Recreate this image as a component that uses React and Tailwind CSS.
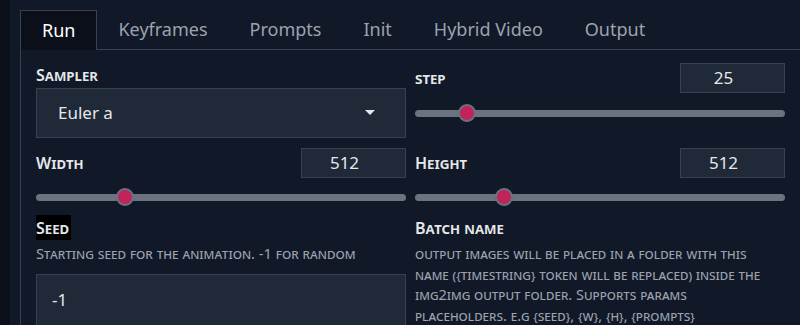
import React from "react";

const font = { fontFamily: '"Noto Sans", "Open Sans", sans-serif' };

function Label({ children, className = "" }) {
  return (
    <span className={"[font-variant:small-caps] text-[16px] leading-[20px] text-[#e5e7eb] font-semibold " + className}>
      {children}
    </span>
  );
}

function NumBox({ value }) {
  return (
    <div className="w-[105px] h-[30px] border border-[#374151] bg-[#1f2937] flex items-center justify-center pr-[18px] text-[17px] text-[#e5e7eb]">
      {value}
    </div>
  );
}

function Slider({ pct }) {
  return (
    <div className="relative h-[18px] flex items-center">
      <div className="w-full h-[7px] rounded-full bg-[#6b7280]" />
      <div
        className="absolute top-0 w-[18px] h-[18px] rounded-full bg-[#c0245a] border-2 border-[#6b7280] -translate-x-1/2"
        style={{ left: pct + "%" }}
      />
    </div>
  );
}

export default function App() {
  const tabs = ["Keyframes", "Prompts", "Init", "Hybrid Video", "Output"];
  return (
    <div className="w-[800px] h-[325px] overflow-hidden bg-[#111827] flex" style={font}>
      <div className="w-[10px] bg-[#0b0f19] shrink-0" />
      <div className="flex-1 pl-[10px] pt-[10px] flex flex-col min-h-0">
        <div className="flex h-[40px] shrink-0 items-stretch">
          <div className="px-[21px] border border-b-0 border-[#374151] bg-[#0b0f19] flex items-center text-[18px] text-white">
            Run
          </div>
          <div className="flex-1 flex border-b border-[#374151]">
            {tabs.map((t) => (
              <div key={t} className="px-[21px] flex items-center text-[18px] text-[#9ca3af]">
                {t}
              </div>
            ))}
          </div>
        </div>
        <div className="flex-1 shrink-0 border-l border-[#374151] pl-[15px] pr-[15px] pt-[12px] grid grid-cols-2 gap-x-[9px] content-start">
          {/* Row 1 */}
          <div className="flex flex-col">
            <div className="h-[26px] flex items-center"><Label>Sampler</Label></div>
            <div className="h-[50px] border border-[#374151] bg-[#1f2937] flex items-center justify-between pl-[21px] pr-[30px] text-[17px] text-[#e5e7eb]">
              <span>Euler a</span>
              <svg width="10" height="6" viewBox="0 0 10 6"><path d="M0 0 L10 0 L5 5 Z" fill="#e5e7eb" /></svg>
            </div>
          </div>
          <div className="flex flex-col">
            <div className="h-[30px] mt-[1px] flex items-center justify-between">
              <Label className="font-bold">step</Label>
              <NumBox value="25" />
            </div>
            <div className="mt-[11px]"><Slider pct={14} /></div>
          </div>
          {/* Row 2 */}
          <div className="flex flex-col mt-[10px]">
            <div className="h-[30px] flex items-center justify-between">
              <Label>Width</Label>
              <NumBox value="512" />
            </div>
            <div className="mt-[10px]"><Slider pct={24} /></div>
          </div>
          <div className="flex flex-col mt-[10px]">
            <div className="h-[30px] flex items-center justify-between">
              <Label>Height</Label>
              <NumBox value="512" />
            </div>
            <div className="mt-[10px]"><Slider pct={24} /></div>
          </div>
          {/* Row 3 */}
          <div className="flex flex-col mt-[9px]">
            <div className="flex">
              <Label className="bg-black h-[25px] flex items-center pr-[2px]">Seed</Label>
            </div>
            <div className="[font-variant:small-caps] text-[14.7px] leading-[20px] text-[#9ca3af] mt-[3px]">
              Starting seed for the animation. -1 for random
            </div>
            <div className="h-[60px] mt-[11px] border border-[#374151] bg-[#1f2937] pl-[15px] pt-[13px] text-[17px] leading-[24px] text-[#e5e7eb]">
              -1
            </div>
          </div>
          <div className="flex flex-col mt-[9px]">
            <div className="flex">
              <Label className="h-[25px] flex items-center">Batch name</Label>
            </div>
            <div className="[font-variant:small-caps] text-[14.5px] leading-[20.5px] text-[#9ca3af] mt-[3px] pr-[5px]">
              output images will be placed in a folder with this name ({"{timestring}"} token will be replaced) inside the img2img output folder. Supports params placeholders. e.g {"{seed}"}, {"{w}"}, {"{h}"}, {"{prompts}"}
            </div>
          </div>
        </div>
      </div>
    </div>
  );
}
